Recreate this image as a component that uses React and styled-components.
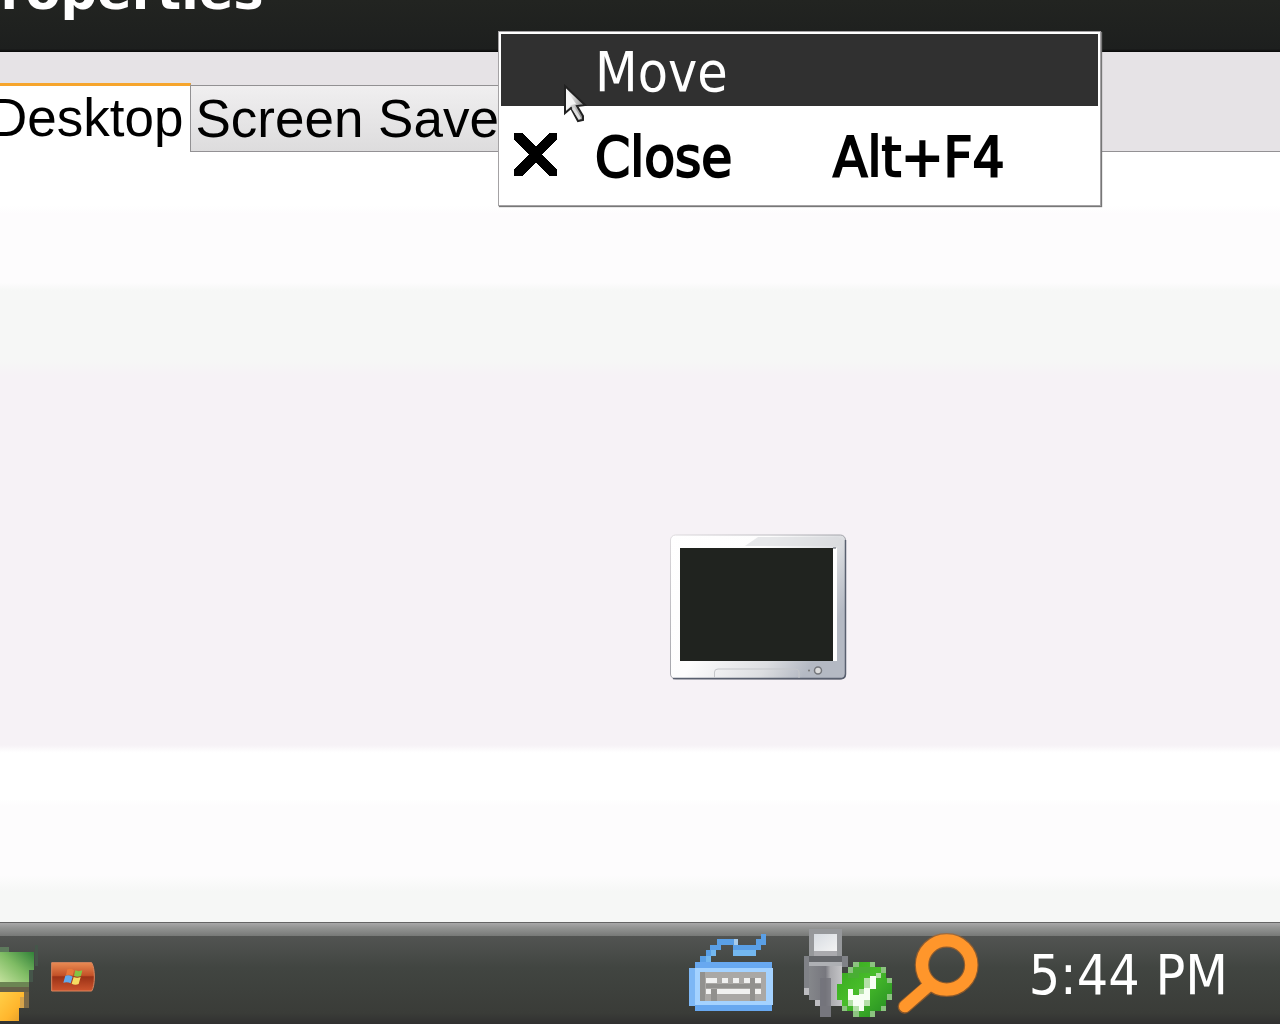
import React from "react";
import styled, { createGlobalStyle } from "styled-components";

const GlobalStyle = createGlobalStyle`
  * {
    box-sizing: border-box;
  }
  body {
    margin: 0;
    overflow: hidden;
  }
  button {
    border: 0;
    padding: 0;
    background: none;
    color: inherit;
    font: inherit;
    text-align: left;
  }
  svg {
    display: block;
  }
`;

const KEY_TOPS = [
  [107, 204, 34],
  [157, 204, 16],
  [189, 204, 18],
  [222, 204, 18],
  [255, 204, 18],
  [107, 237, 16],
  [141, 237, 99],
  [255, 237, 18],
];

const CloseIcon = () => (
  <svg width="43" height="43" viewBox="0 0 43 43" shapeRendering="crispEdges" aria-hidden="true">
    <path d="M0 0H8L21.5 13.500L35 0H43V6L28 21.500L43 37V43H35L21.500 29.500L8 43H0V37L15 21.500L0 6Z" />
  </svg>
);

const MonitorIcon = () => (
  <svg width="178" height="148" viewBox="0 0 178 148" role="img" aria-label="Monitor">
    <defs>
      <linearGradient id="bezel" x1="0" y1="0" x2="1" y2="0.5">
        <stop offset="0" stopColor="#fff" />
        <stop offset="0.45" stopColor="#fdfdfd" />
        <stop offset="0.8" stopColor="#dcdee1" />
        <stop offset="1" stopColor="#b4b9c3" />
      </linearGradient>
      <linearGradient id="edge" x1="0" y1="0" x2="1" y2="1">
        <stop offset="0" stopColor="#dedbde" />
        <stop offset="0.5" stopColor="#a2a3a9" />
        <stop offset="1" stopColor="#3d4151" />
      </linearGradient>
    </defs>
    <rect x="0.5" y="1" width="175" height="144" rx="5" fill="url(#bezel)" stroke="url(#edge)" />
    <path d="M3 144.500H172Q175.500 144 175.500 140V6" fill="none" stroke="#59606f" strokeWidth="1.500" />
    <path d="M88 3H168L172 6V12H75Z" fill="#d8dadd" opacity="0.6" />
    <rect x="10" y="14" width="157" height="113" fill="#fff" />
    <rect x="10" y="14" width="153" height="113" fill="#20231f" />
    <path d="M163 14H166" stroke="#555b66" />
    <path d="M44.500 144V138Q44.500 135 48 135H125Q129 135 129 138V144" fill="none" stroke="#c5c7ca" />
    <circle cx="139" cy="136.500" r="1" fill="#777" />
    <circle cx="148" cy="136.500" r="3.500" fill="#ddd" stroke="#74767b" strokeWidth="1.500" />
  </svg>
);

const KeyboardIcon = () => (
  <svg width="84" height="90" viewBox="57 57 252 270" shapeRendering="crispEdges" aria-hidden="true">
    <path
      d="M273 72h15v32h-15zM141 88h62v16h-62zM257 88h16v33h-16zM120 104h32v17h-32zM188 104h69v34h-69zM107 121h30v17h-30zM91 138h31v17h-31z"
      fill="#5a9fe6"
    />
    <path d="M188 121h69v17h-69zM122 121h15v17h-15zM107 138h15v17h-15z" fill="#73b7ef" />
    <path d="M193 88h10v16h-10z" fill="#a9cbe9" />
    <path d="M75 155h230v148H75z" fill="#68a8f0" />
    <path d="M57 174h18v113H57z" fill="#7db7f5" />
    <path d="M75 174h234v112H75z" fill="#a4d2ff" />
    <path d="M89 187h199v85H89z" fill="#aaa8a5" />
    <path d="M89 187h15v85H89zM107 222h165v13H107zM123 237h18v35h-18zM240 204h15v68h-15z" fill="#92918e" />
    {KEY_TOPS.map(([x, y, width]) => (
      <rect key={`${x}-${y}`} x={x} y={y} width={width} height="16" fill="#f1f1f0" />
    ))}
  </svg>
);

const DeviceIcon = () => (
  <svg width="88" height="90" viewBox="42 57 264 270" shapeRendering="crispEdges" aria-hidden="true">
    <defs>
      <linearGradient id="ball" x1="0" y1="0" x2="1" y2="1">
        <stop offset="0" stopColor="#35a51f" />
        <stop offset="0.45" stopColor="#48bd2a" />
        <stop offset="1" stopColor="#238b22" />
      </linearGradient>
      <linearGradient id="plug" x1="0" y1="0" x2="1" y2="0">
        <stop offset="0" stopColor="#85878b" />
        <stop offset="0.5" stopColor="#77777e" />
        <stop offset="0.65" stopColor="#aaaaae" />
        <stop offset="1" stopColor="#c4c4c7" />
      </linearGradient>
      <linearGradient id="tip" x1="0" y1="0" x2="1" y2="1">
        <stop offset="0" stopColor="#d7dce2" />
        <stop offset="1" stopColor="#f3f3f3" />
      </linearGradient>
    </defs>
    <path d="M57 57h99v81H57z" fill="#96989b" />
    <path d="M73 72h68v50H73z" fill="url(#tip)" />
    <path d="M73 122h68v16H73z" fill="#aaaaae" />
    <path d="M42 138h131v33h-17v116h-33v33H90v-33H75v-17H57v-16H42z" fill="#808287" />
    <path d="M57 155h99v132H75v-17H57z" fill="url(#plug)" />
    <path d="M57 138h99v17H57z" fill="#65676b" />
    <path d="M57 155h99v13H57z" fill="#aeb0b4" />
    <path d="M90 205h33v115H90z" fill="#73737b" opacity="0.8" />
    <path d="M42 235h15v20H42zM75 270h15v17H75z" fill="#bcbcc0" />
    <path d="M190 155h65v16h33v33h17v66h-17v33h-33v17h-65v-17h-34v-32h-16v-48h16v-33h34z" fill="url(#ball)" />
    <path
      d="M190 155h17v16h-17zM240 155h16v16h-16zM273 171h15v18h-15zM173 171h16v18h-16zM290 204h15v16h-15zM290 253h15v17h-15zM273 287h15v16h-15zM240 303h16v17h-16zM190 303h17v17h-17zM156 287h16v16h-16z"
      fill="#8cc380"
    />
    <path d="M190 171h49v18h-49zM173 189h33v15h-33z" fill="#49ae34" />
    <path
      d="M240 198h17v39h-17zM223 233h17v37h-17zM207 253h16v50h-16zM190 255h17v32h-17zM175 238h15v32h-15z"
      fill="#f7fff4"
    />
    <path d="M223 204h17v29h-17zM207 237h16v16h-16zM190 287h17v16h-17zM173 270h17v17h-17zM257 188h16v16h-16zM223 270h17v17h-17z" fill="#b5e0a9" />
  </svg>
);

const SearchIcon = () => (
  <svg width="83" height="90" viewBox="320 57 249 270" aria-hidden="true">
    <g fill="none" stroke="#aa6326" opacity="0.7">
      <circle cx="469" cy="165" r="74" strokeWidth="44" />
      <path d="M343 290L412 231" strokeWidth="42" strokeLinecap="round" />
    </g>
    <g fill="none" stroke="#ff962b">
      <circle cx="469" cy="165" r="74" strokeWidth="37" />
      <path d="M344 289L414 227" strokeWidth="36" strokeLinecap="round" />
    </g>
  </svg>
);

const StartFlag = () => (
  <svg width="40" height="80" viewBox="0 100 120 240" shapeRendering="crispEdges" aria-hidden="true">
    <defs>
      <linearGradient id="green" x1="0" y1="1" x2="1" y2="0">
        <stop offset="0" stopColor="#c1e09b" />
        <stop offset="0.5" stopColor="#7fbc64" />
        <stop offset="1" stopColor="#2f8038" />
      </linearGradient>
      <linearGradient id="yellow" x1="0" y1="0" x2="1" y2="1">
        <stop offset="0" stopColor="#ffcf48" />
        <stop offset="0.6" stopColor="#ffb62d" />
        <stop offset="1" stopColor="#e09a2b" />
      </linearGradient>
    </defs>
    <path d="M0 111h27v15H0z" fill="#5d7a5c" />
    <path d="M104 105h10v65h-10zM88 181h10v35H88z" fill="#45564a" />
    <path d="M0 126h103v54H88v36H0z" fill="url(#green)" />
    <path d="M0 216h88v15H0z" fill="#6c8553" />
    <path d="M0 231h88v15H0z" fill="#666048" />
    <path d="M72 246h15v48H72z" fill="#7c6a48" />
    <path d="M0 246h72v48H57v41H0z" fill="url(#yellow)" />
    <path d="M60 262h12v32H60z" fill="#d6a44b" />
  </svg>
);

const WindowsChip = () => (
  <svg width="44" height="30" viewBox="154 156 132 90" aria-hidden="true">
    <defs>
      <linearGradient id="chip" x1="0" y1="0" x2="0" y2="1">
        <stop offset="0" stopColor="#e98a52" />
        <stop offset="0.45" stopColor="#c45228" />
        <stop offset="0.5" stopColor="#9b3217" />
        <stop offset="1" stopColor="#cd552d" />
      </linearGradient>
    </defs>
    <path d="M156 158H276Q284 172 284 201T276 243H156Z" fill="url(#chip)" stroke="#dc875f" strokeWidth="3" />
    <path d="M203 178Q213 174 223 181L219 197Q209 192 199 196Z" fill="#e8783a" />
    <path d="M227 181Q237 186 248 181L244 198Q233 203 223 198Z" fill="#84c544" />
    <path d="M197 197Q208 193 219 200L213 220Q203 214 191 218Z" fill="#62a9eb" />
    <path d="M222 201Q232 206 243 201L237 222Q226 227 216 221Z" fill="#f5dd62" />
  </svg>
);

const PointerIcon = () => (
  <svg width="24" height="42" viewBox="0 0 24 42" aria-hidden="true">
    <defs>
      <linearGradient id="arrow" x1="0" y1="0" x2="1" y2="0.4">
        <stop offset="0" stopColor="#fff" />
        <stop offset="0.4" stopColor="#e4e4e4" />
        <stop offset="1" stopColor="#8c8c8c" />
      </linearGradient>
    </defs>
    <path d="M2 2V29L8 24L15 37L20 36V32L14 22L22 21Z" fill="url(#arrow)" stroke="#222" strokeWidth="2" />
    <path d="M3 5V26L8 21L13 20Z" fill="#f6f6f6" />
    <path d="M10 24L17 35" stroke="#dedede" strokeWidth="3" />
  </svg>
);

export default function App() {
  return (
    <>
      <GlobalStyle />
      <Screen>
        <TitleBar>
          <Title>Properties</Title>
        </TitleBar>
        <TabStrip role="tablist">
          <Tab role="tab" aria-selected="true" $active>
            Desktop
          </Tab>
          <Tab role="tab" aria-selected="false">
            Screen Saver
          </Tab>
        </TabStrip>
        <TabPanel role="tabpanel">
          <MonitorIcon />
        </TabPanel>
        <Taskbar>
          <StartButton aria-label="Start">
            <StartFlag />
          </StartButton>
          <ChipButton aria-label="Windows">
            <WindowsChip />
          </ChipButton>
          <Tray>
            <TrayButton aria-label="Keyboard" $gap={31}>
              <KeyboardIcon />
            </TrayButton>
            <TrayButton aria-label="Safely remove hardware" $gap={5}>
              <DeviceIcon />
            </TrayButton>
            <TrayButton aria-label="Search" $gap={49}>
              <SearchIcon />
            </TrayButton>
            <Clock>5:44 PM</Clock>
          </Tray>
        </Taskbar>
        <Menu role="menu">
          <MenuItem role="menuitem" $selected>
            <MenuIcon />
            <MenuText>Move</MenuText>
          </MenuItem>
          <MenuItem role="menuitem">
            <MenuIcon>
              <CloseIcon />
            </MenuIcon>
            <MenuText>Close</MenuText>
            <MenuText>Alt+F4</MenuText>
          </MenuItem>
        </Menu>
        <Pointer>
          <PointerIcon />
        </Pointer>
      </Screen>
    </>
  );
}

const Screen = styled.div`
  position: relative;
  display: flex;
  flex-direction: column;
  min-height: 100vh;
  overflow: hidden;
  background-color: #fff;
  color: #000;
`;

const TitleBar = styled.header`
  height: 52px;
  overflow: hidden;
  background: linear-gradient(#222421, #1d1f1e 94%, #080808);
`;

const Title = styled.h1`
  margin: -38px 0 0 -37px;
  color: #fff;
  font: bold 51px/60px "DejaVu Sans", sans-serif;
`;

const TabStrip = styled.div`
  display: flex;
  align-items: flex-end;
  height: 100px;
  padding-top: 31px;
  background-color: #e6e3e6;
  border-bottom: 1px solid #939194;
`;

const Tab = styled.button`
  flex: none;
  height: ${({ $active }) => ($active ? "69px" : "66px")};
  margin-bottom: ${({ $active }) => ($active ? "-1px" : "0")};
  padding: ${({ $active }) => ($active ? "0 7px 3px 0" : "0 4px")};
  margin-left: ${({ $active }) => ($active ? "-11px" : "0")};
  border-top: ${({ $active }) => ($active ? "3px solid #f6a52c" : "1px solid #929193")};
  border-right: 1px solid #929193;
  background: ${({ $active }) => ($active ? "#fff" : "linear-gradient(#f0eff0, #dddcdd)")};
  font-family: "Liberation Sans", Arial, sans-serif;
  font-size: 53px;
  line-height: 60px;
  white-space: nowrap;
`;

const TabPanel = styled.main`
  flex: 1;
  display: flex;
  justify-content: center;
  padding: 382px 0 0 238px;
  background: linear-gradient(
    #fff 7%,
    #fdfcfd 8%,
    #fdfcfd 17%,
    #f6f7f6 18%,
    #f6f7f6 27%,
    #f6f2f6 29%,
    #f6f2f6 77%,
    #fff 78%,
    #fff 84%,
    #fdfcfd 85%,
    #fdfcfd 94%,
    #f6f7f6 96%
  );
`;

const Taskbar = styled.footer`
  display: flex;
  align-items: flex-start;
  height: 102px;
  border-top: 1px solid #656565;
  color: #fff;
  background: linear-gradient(
    #a8a8a8 0,
    #969796 4px,
    #777977 13px,
    #525452 13px,
    #414541 45px,
    #3a3c38 90px,
    #303030 100%
  );
`;

const StartButton = styled.button`
  margin-top: 20px;
`;

const ChipButton = styled.button`
  margin: 39px 0 0 11px;
`;

const Tray = styled.div`
  display: flex;
  margin-left: auto;
  padding: 6px 52px 0 0;
`;

const TrayButton = styled.button`
  margin-right: ${({ $gap }) => $gap}px;
`;

const Clock = styled.time`
  padding-top: 14px;
  font-family: "DejaVu Sans Condensed", Tahoma, sans-serif;
  font-size: 55px;
  line-height: 64px;
  white-space: nowrap;
`;

const Menu = styled.div`
  position: absolute;
  top: 31px;
  left: 498px;
  width: 603px;
  padding: 2px;
  border: 1px solid #a4a2a4;
  background-color: #fff;
  box-shadow: 1px 1px 1px #777;
  font-family: "DejaVu Sans Condensed", Tahoma, sans-serif;
`;

const MenuItem = styled.button`
  display: grid;
  grid-template-columns: 94px 238px 1fr;
  align-items: center;
  width: 100%;
  height: ${({ $selected }) => ($selected ? "72px" : "97px")};
  font-size: ${({ $selected }) => ($selected ? "55px" : "56px")};
  line-height: 64px;
  color: ${({ $selected }) => ($selected ? "#fff" : "#000")};
  background-color: ${({ $selected }) => ($selected ? "#303030" : "#fff")};
  -webkit-text-stroke: ${({ $selected }) => ($selected ? "0" : "2px #000")};
`;

const MenuIcon = styled.span`
  padding-left: 13px;
`;

const MenuText = styled.span`
  padding-top: 4px;
`;

const Pointer = styled.div`
  position: absolute;
  top: 84px;
  left: 563px;
  pointer-events: none;
`;
